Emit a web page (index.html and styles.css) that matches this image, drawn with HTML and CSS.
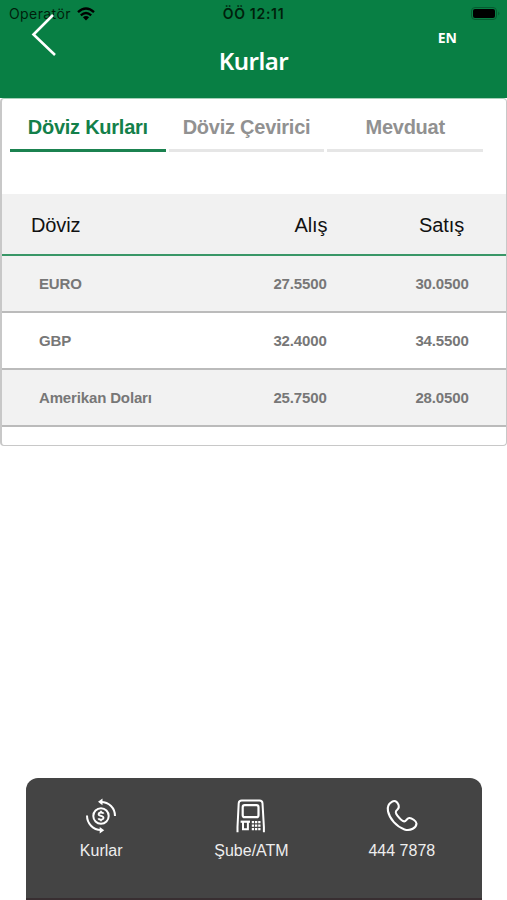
FILE: index.html
```html
<!DOCTYPE html>
<html lang="tr">
<head>
    <meta charset="UTF-8">
    <meta name="viewport" content="width=device-width, initial-scale=1.0">
    <title>Kurlar</title>
    <link rel="stylesheet" href="styles.css">
</head>
<body>
    <header class="header">
        <div class="status-bar">
            <div class="carrier">
                <span class="carrier-name">Operatör</span>
                <svg class="wifi" viewBox="0 0 18 14" width="18" height="14">
                    <path d="M1 5.2 Q9 -2 17 5.2" fill="none" stroke="#000" stroke-width="2.4"/>
                    <path d="M3.8 8.3 Q9 3.7 14.2 8.3" fill="none" stroke="#000" stroke-width="2.3"/>
                    <path d="M5.9 10.3 Q9 7.6 12.1 10.3 L9 13.4 Z"/>
                </svg>
            </div>
            <span class="clock">ÖÖ 12:11</span>
            <svg class="battery" viewBox="0 0 30 14" width="30" height="14">
                <rect x="0.5" y="0.5" width="25" height="12" rx="3.5" fill="none" stroke="#055c30"/>
                <rect x="2" y="2" width="22" height="9" rx="2"/>
                <path d="M27.3 4.5 Q29.5 6.5 27.3 8.5 Z" fill="#055c30"/>
            </svg>
        </div>
        <a class="back" href="#" aria-label="Geri">
            <svg viewBox="0 0 26 44" width="26" height="44">
                <path d="M22 2 L2.5 21.5 L24 42" fill="none" stroke="#fff" stroke-width="2.6"/>
            </svg>
        </a>
        <h1>Kurlar</h1>
        <a class="lang" href="#">EN</a>
    </header>

    <main class="card">
        <nav class="tabs">
            <a class="tab active" href="#">Döviz Kurları</a>
            <a class="tab" href="#">Döviz Çevirici</a>
            <a class="tab" href="#">Mevduat</a>
        </nav>

        <table class="rates">
            <thead>
                <tr><th class="name">Döviz</th><th class="buy">Alış</th><th class="sell">Satış</th></tr>
            </thead>
            <tbody>
                <tr><td>EURO</td><td>27.5500</td><td>30.0500</td></tr>
                <tr><td>GBP</td><td>32.4000</td><td>34.5500</td></tr>
                <tr><td>Amerikan Doları</td><td>25.7500</td><td>28.0500</td></tr>
            </tbody>
        </table>
    </main>

    <footer class="bottom-menu">
        <a class="menu-item" href="#">
            <svg viewBox="0 0 36 36" width="36" height="36" fill="none" stroke="#fff" stroke-width="2">
                <circle cx="18" cy="18" r="7.7"/>
                <path d="M20.7 15.6 C20 14.3 16 13.8 15.6 16 C15.3 18.4 20.7 17.4 20.5 20 C20.2 22.2 16 22 15.3 20.3 M18 12.8 V14.6 M18 21.4 V23.2" stroke-width="1.8"/>
                <path d="M18 4 C26 4 32 10 32 18"/>
                <path d="M4 17.5 C4 25.5 10 32 18 32"/>
                <path d="M15 3.8 L19.5 0.6 V7.2 Z M21.2 32.2 L16.7 28.9 V35.4 Z" fill="#fff" stroke="none"/>
            </svg>
            <span class="label">Kurlar</span>
        </a>
        <a class="menu-item" href="#">
            <svg viewBox="0 0 36 36" width="36" height="36" fill="none" stroke="#fff" stroke-width="2">
                <path d="M4.5 34.3 V29 L5.7 5.2 Q5.9 2.4 8.7 2.4 H26.5 Q29.3 2.4 29.5 5.2 L30.9 29 V34.3"/>
                <rect x="9.7" y="7.2" width="15.8" height="12" rx="2" stroke-width="2.2"/>
                <path d="M7.6 23.7 H17" stroke-width="2.2"/>
                <path d="M10 24 V31.2 H14.9 V24"/>
                <path d="M18.8 24.2 H27.6 M18.8 27.7 H27.6 M18.8 31.2 H27.6" stroke-width="2.3" stroke-dasharray="2.3 0.9"/>
            </svg>
            <span class="label">Şube/ATM</span>
        </a>
        <a class="menu-item" href="#">
            <svg viewBox="0 0 36 36" width="36" height="36" fill="none" stroke="#fff" stroke-width="2.1" stroke-linejoin="round">
                <path d="M8.2 3.6 C10.6 2.2 12.8 3.4 14 5.8 C15.3 8.1 15.4 9.8 13.2 11.8 C11 13.6 11.3 15 13.4 17.7 C16 21 18.4 23.3 20.2 23.4 C22.3 23.5 22.2 20.4 25.2 20 C27.4 19.7 32.5 23.2 32.5 25.5 C32.5 29.5 26.5 33.5 20.5 31.4 C12.5 28.7 5.6 20.8 4 13.2 C3 8.6 5.2 5.3 8.2 3.6 Z"/>
            </svg>
            <span class="label">444 7878</span>
        </a>
    </footer>
</body>
</html>
```

FILE: styles.css
```css
* {
    box-sizing: border-box;
}

body {
    margin: 0;
    height: 900px;
    display: flex;
    flex-direction: column;
    background: #fff;
    font-family: "Liberation Sans", Arial, sans-serif;
    overflow: hidden;
}

a {
    color: inherit;
    text-decoration: none;
}

svg {
    display: block;
}

.header {
    position: relative;
    height: 98px;
    background: #087f44;
    color: #fff;
    text-align: center;
}

.status-bar {
    display: grid;
    grid-template-columns: 1fr 80px 1fr;
    align-items: center;
    height: 27px;
    padding: 0 6px 0 9px;
    color: #001f0c;
    font-family: Inter, sans-serif;
}

.carrier {
    display: flex;
    align-items: center;
    gap: 6px;
}

.carrier-name {
    font-size: 14px;
    letter-spacing: 0.4px;
}

.clock {
    margin-left: -3px;
    font-size: 14px;
    font-weight: 600;
    letter-spacing: 0.7px;
    white-space: nowrap;
}

.battery {
    justify-self: end;
}

/* the arrow reaches up over the status bar */
.back {
    position: absolute;
    top: 13px;
    left: 31px;
}

.lang {
    position: absolute;
    top: 28px;
    right: 50px;
    font: 700 14px/19px "Noto Sans", sans-serif;
}

h1 {
    margin: 17px 0 0;
    font: 600 24px/34px "Noto Sans", sans-serif;
    letter-spacing: -0.5px;
}

.card {
    height: 348px;
    border: 1px solid #c8c8c8;
    border-left-width: 2px;
    border-top-color: #a5d0b8;
    border-radius: 4px;
}

.tabs {
    display: flex;
    gap: 3px;
    height: 95px;
    padding: 5px 23px 0 8px;
}

.tab {
    flex: 1;
    height: 48px;
    padding-top: 12px;
    border-bottom: 3px solid #e6e6e6;
    color: #919191;
    font-size: 20px;
    font-weight: bold;
    letter-spacing: -0.25px;
    line-height: 23px;
    text-align: center;
    white-space: nowrap;
}

.tab.active {
    border-color: #1b8250;
    color: #13804a;
}

.rates {
    width: 100%;
    table-layout: fixed;
    border-collapse: separate;
    border-spacing: 0;
}

.rates th {
    height: 62px;
    padding: 2px 0 0;
    border-bottom: 2px solid #399767;
    background: #f1f1f1;
    color: #111;
    font-size: 20px;
    font-weight: normal;
    letter-spacing: -0.1px;
}

.rates .name {
    width: 231px;
    padding-left: 29px;
    text-align: left;
}

.rates .buy {
    width: 156px;
}

.rates .sell {
    padding-right: 12px;
}

.rates td {
    height: 57px;
    padding: 0 11px 0 0;
    border-bottom: 2px solid #bbb;
    color: #777;
    font-size: 15px;
    font-weight: bold;
    letter-spacing: -0.15px;
    text-align: center;
}

.rates td:first-child {
    padding-left: 37px;
    text-align: left;
}

.rates td:nth-child(2) {
    padding-right: 22px;
}

.rates tbody tr:nth-child(odd) {
    background: #f2f2f2;
}

.bottom-menu {
    display: grid;
    grid-template-columns: repeat(3, 1fr);
    height: 122px;
    margin: auto 25px 0 26px;
    padding: 20px 5px 0 0;
    border-radius: 12px 12px 0 0;
    border-bottom: 2px solid #382e31;
    background: #444;
    color: #eee;
}

.menu-item {
    display: flex;
    flex-direction: column;
    align-items: center;
    gap: 5px;
    font-size: 16px;
    line-height: 24px;
}
```
